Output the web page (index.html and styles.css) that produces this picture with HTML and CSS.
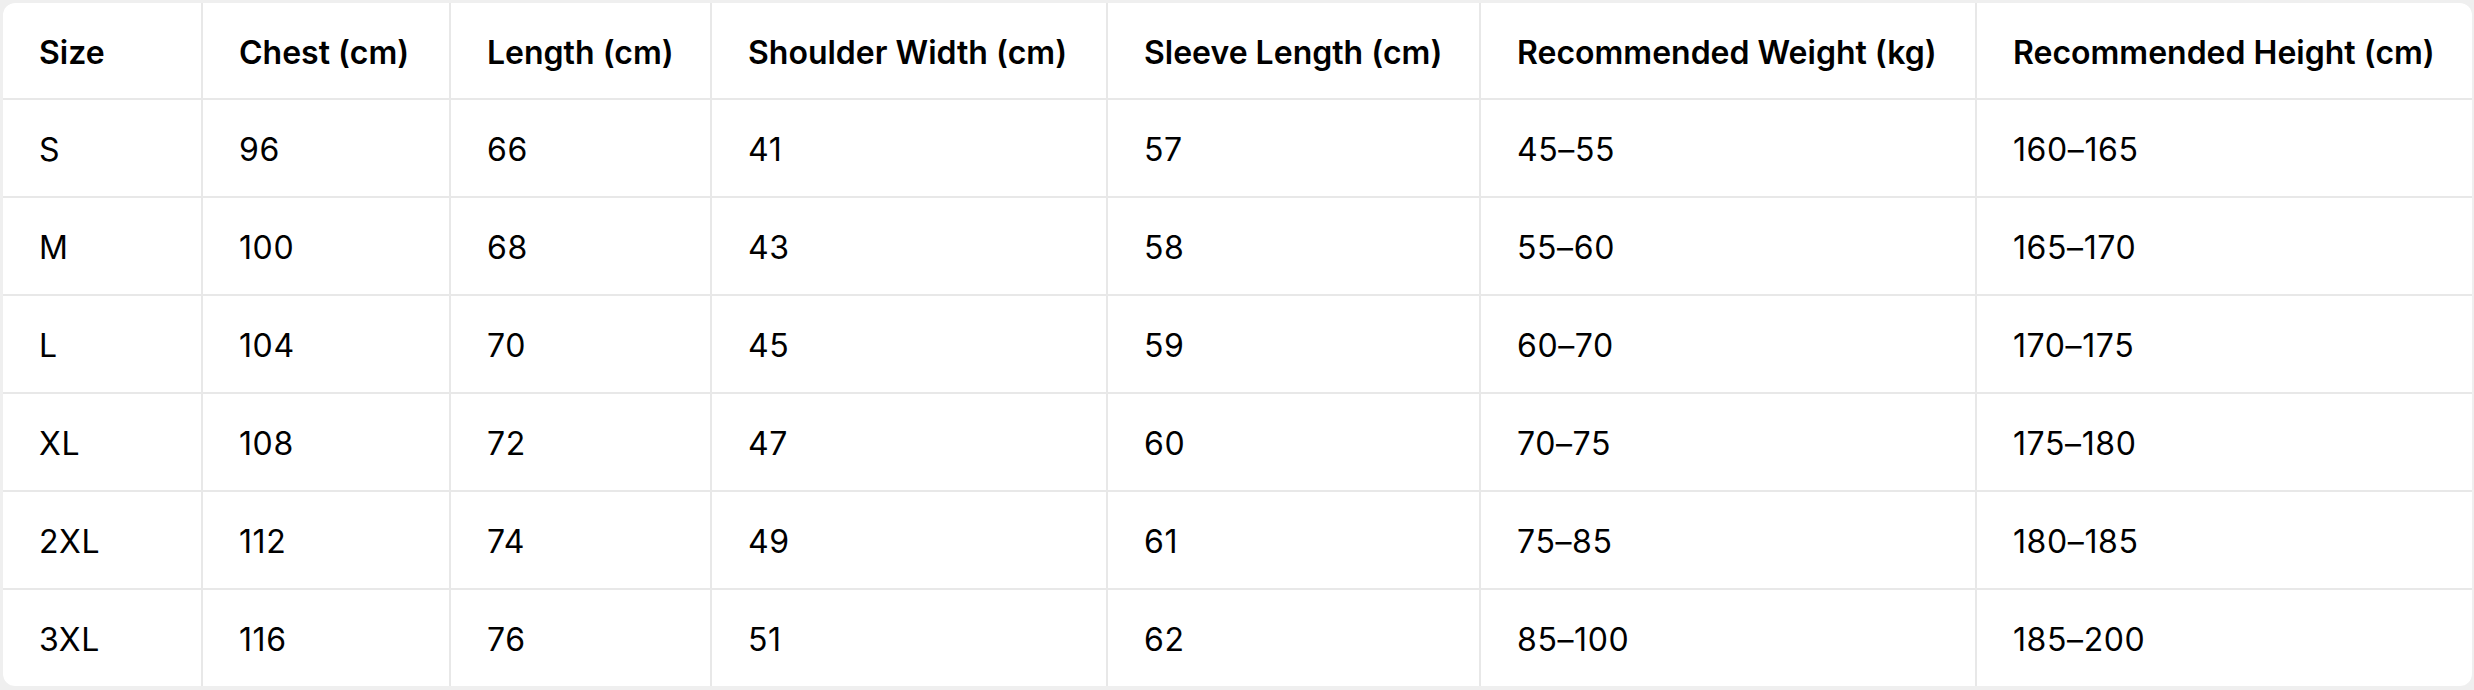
FILE: index.html
```html
<!DOCTYPE html>
<html lang="en">
<head>
<meta charset="utf-8">
<title>Size Chart</title>
<link rel="stylesheet" href="styles.css">
</head>
<body>
<div class="card">
  <div class="grid">
    <div class="cell head">Size</div>
    <div class="cell head">Chest (cm)</div>
    <div class="cell head">Length (cm)</div>
    <div class="cell head">Shoulder Width (cm)</div>
    <div class="cell head">Sleeve Length (cm)</div>
    <div class="cell head">Recommended Weight (kg)</div>
    <div class="cell head">Recommended Height (cm)</div>

    <div class="cell">S</div><div class="cell">96</div><div class="cell">66</div><div class="cell">41</div><div class="cell">57</div><div class="cell">45–55</div><div class="cell">160–165</div>
    <div class="cell">M</div><div class="cell">100</div><div class="cell">68</div><div class="cell">43</div><div class="cell">58</div><div class="cell">55–60</div><div class="cell">165–170</div>
    <div class="cell">L</div><div class="cell">104</div><div class="cell">70</div><div class="cell">45</div><div class="cell">59</div><div class="cell">60–70</div><div class="cell">170–175</div>
    <div class="cell">XL</div><div class="cell">108</div><div class="cell">72</div><div class="cell">47</div><div class="cell">60</div><div class="cell">70–75</div><div class="cell">175–180</div>
    <div class="cell">2XL</div><div class="cell">112</div><div class="cell">74</div><div class="cell">49</div><div class="cell">61</div><div class="cell">75–85</div><div class="cell">180–185</div>
    <div class="cell">3XL</div><div class="cell">116</div><div class="cell">76</div><div class="cell">51</div><div class="cell">62</div><div class="cell">85–100</div><div class="cell">185–200</div>
  </div>
</div>
</body>
</html>
```

FILE: styles.css
```css
html, body {
  margin: 0;
  padding: 0;
  background: #efefef;
}
body {
  padding: 3px 0 0 3px;
  font-family: Inter, "Liberation Sans", sans-serif;
  color: #000;
}
.card {
  width: 2469px;
  height: 683px;
  background: #ffffff;
  border-radius: 12px;
  overflow: hidden;
}
.grid {
  display: grid;
  grid-template-columns: 198px 246px 259px 394px 371px 494px 1fr;
  grid-template-rows: 95px repeat(6, 96px);
  gap: 2px;
  background: #e8e8e8;
  height: 100%;
}
.cell {
  background: #ffffff;
  display: flex;
  align-items: center;
  padding: 3px 0 0 36px;
  font-size: 32px;
  font-weight: 400;
  letter-spacing: 0.6px;
  white-space: nowrap;
}
.cell.head {
  font-weight: 600;
  letter-spacing: 0;
}
```
